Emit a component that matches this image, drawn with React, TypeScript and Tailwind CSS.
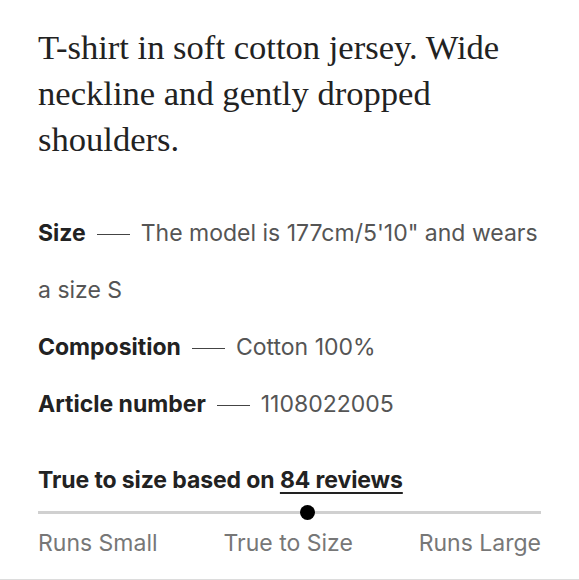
export default function App() {
  return (
    <div className="w-[579px] h-[580px] bg-white border-b border-[#dcdcdc] px-[38px] pt-[24px] box-border overflow-hidden">
      <p className="w-[490px] text-[34.6px] leading-[46px] text-[#222] font-['Liberation_Serif',serif]">
        T-shirt in soft cotton jersey. Wide neckline and gently dropped shoulders.
      </p>

      <div className="mt-[43px] font-['Inter',sans-serif] text-[23px] leading-[57px] text-[#555]">
        <p>
          <span className="font-bold text-[#222]">Size</span>
          <span className="inline-block align-middle w-[33px] border-t border-[#444] mx-[11px]" />
          <span>The model is 177cm/5'10" and wears a size S</span>
        </p>
        <p>
          <span className="font-bold text-[#222]">Composition</span>
          <span className="inline-block align-middle w-[33px] border-t border-[#444] mx-[11px]" />
          <span>Cotton 100%</span>
        </p>
        <p>
          <span className="font-bold text-[#222]">Article number</span>
          <span className="inline-block align-middle w-[33px] border-t border-[#444] mx-[11px]" />
          <span>1108022005</span>
        </p>
      </div>

      <div className="mt-[32px] font-['Inter',sans-serif]">
        <p className="text-[23px] leading-[30px] font-bold text-[#222] tracking-[-0.1px]">
          True to size based on <span className="underline underline-offset-4">84 reviews</span>
        </p>
        <div className="relative mt-[16px] h-[3px] bg-[#d0d0d0]">
          <span className="absolute left-[262px] -top-[6px] w-[15px] h-[15px] rounded-full bg-black" />
        </div>
        <div className="mt-[14px] flex justify-between text-[23px] leading-[30px] text-[#777]">
          <span>Runs Small</span>
          <span>True to Size</span>
          <span>Runs Large</span>
        </div>
      </div>
    </div>
  );
}
